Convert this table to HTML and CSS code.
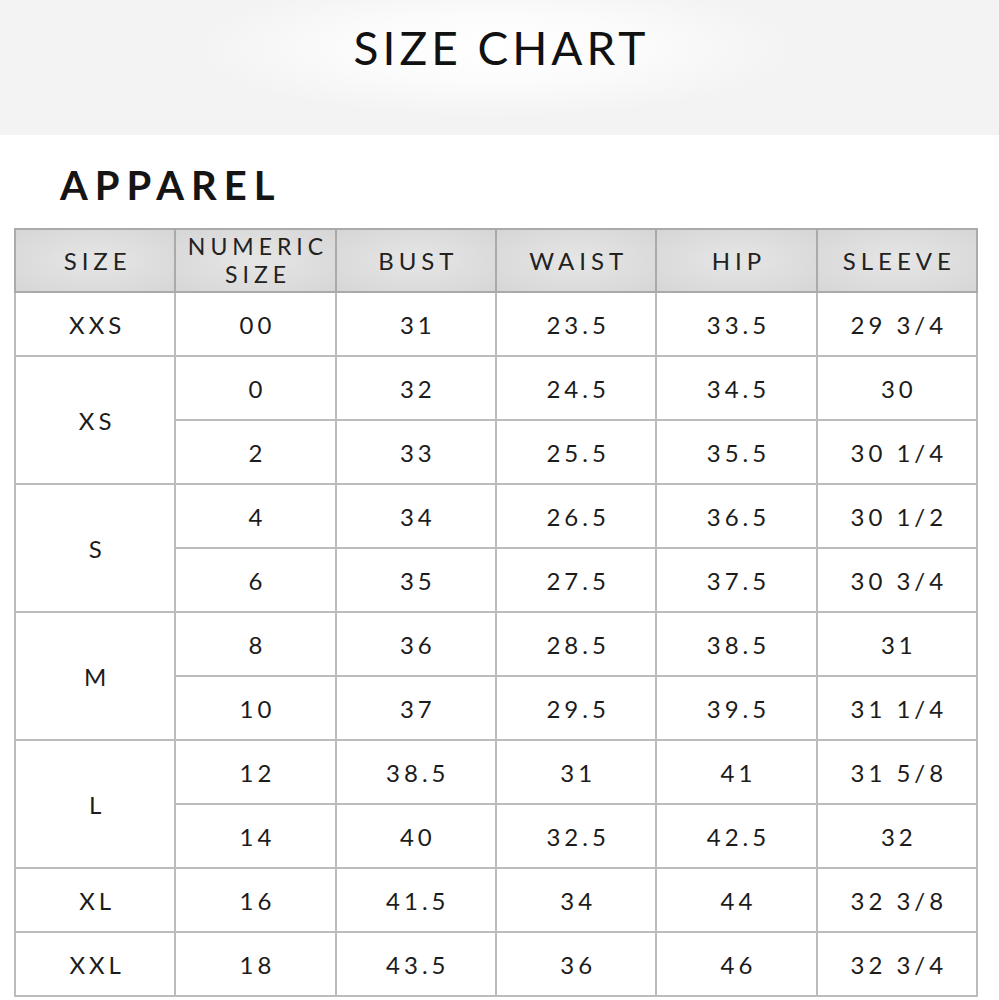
FILE: index.html
```html
<!DOCTYPE html>
<html>
<head>
<meta charset="utf-8">
<link rel="stylesheet" href="styles.css">
</head>
<body>
<header class="banner">
  <h1 class="banner-title">SIZE CHART</h1>
</header>
<main class="content">
  <h2 class="section-title">APPAREL</h2>
  <table class="chart">
    <thead>
      <tr>
        <th>SIZE</th>
        <th class="two-line"><span class="line">NUMERIC</span><span class="line">SIZE</span></th>
        <th>BUST</th>
        <th>WAIST</th>
        <th>HIP</th>
        <th>SLEEVE</th>
      </tr>
    </thead>
    <tbody>
      <tr><td>XXS</td><td>00</td><td>31</td><td>23.5</td><td>33.5</td><td>29 3/4</td></tr>
      <tr><td rowspan="2">XS</td><td>0</td><td>32</td><td>24.5</td><td>34.5</td><td>30</td></tr>
      <tr><td>2</td><td>33</td><td>25.5</td><td>35.5</td><td>30 1/4</td></tr>
      <tr><td rowspan="2">S</td><td>4</td><td>34</td><td>26.5</td><td>36.5</td><td>30 1/2</td></tr>
      <tr><td>6</td><td>35</td><td>27.5</td><td>37.5</td><td>30 3/4</td></tr>
      <tr><td rowspan="2">M</td><td>8</td><td>36</td><td>28.5</td><td>38.5</td><td>31</td></tr>
      <tr><td>10</td><td>37</td><td>29.5</td><td>39.5</td><td>31 1/4</td></tr>
      <tr><td rowspan="2">L</td><td>12</td><td>38.5</td><td>31</td><td>41</td><td>31 5/8</td></tr>
      <tr><td>14</td><td>40</td><td>32.5</td><td>42.5</td><td>32</td></tr>
      <tr><td>XL</td><td>16</td><td>41.5</td><td>34</td><td>44</td><td>32 3/8</td></tr>
      <tr><td>XXL</td><td>18</td><td>43.5</td><td>36</td><td>46</td><td>32 3/4</td></tr>
    </tbody>
  </table>
</main>
</body>
</html>
```
FILE: styles.css
```css
html, body {
  margin: 0;
  padding: 0;
  background: #ffffff;
}
body {
  font-family: Lato, "Noto Sans", sans-serif;
  color: #1e1e1e;
}
.banner {
  height: 135px;
  background: radial-gradient(ellipse 300px 70px at 495px 48px, #ffffff 0%, #fbfbfb 50%, #f3f3f3 100%), #f3f3f3;
  display: flex;
  justify-content: center;
}
.banner-title {
  margin: 0;
  padding-top: 23px;
  padding-left: 4px;
  font-size: 46px;
  font-weight: 400;
  letter-spacing: 4px;
  line-height: 50px;
  color: #111;
}
.content {
  padding: 0 21px 0 14px;
}
.section-title {
  margin: 0;
  padding: 30px 0 0 46px;
  height: 93px;
  box-sizing: border-box;
  font-size: 40px;
  font-weight: 700;
  letter-spacing: 7px;
  line-height: 40px;
  color: #151515;
}
.chart {
  width: 964px;
  border-collapse: collapse;
  table-layout: fixed;
}
.chart th, .chart td {
  border: 2px solid #bcbcbc;
  text-align: center;
  vertical-align: middle;
  padding: 0 0 0 4px;
  font-size: 24px;
  letter-spacing: 4px;
  font-weight: 400;
}
.chart th {
  height: 59px;
  padding-left: 5px;
  letter-spacing: 5px;
  background: radial-gradient(ellipse at center, #e6e6e6 0%, #d6d6d6 100%);
  border-color: #aaaaaa;
  color: #222;
}
.chart th.two-line {
  font-size: 23px;
  line-height: 28px;
  padding-bottom: 2px;
}
.chart th.two-line .line {
  display: block;
  height: 28px;
}
.chart td {
  height: 62px;
  color: #1c1c1c;
}
```
